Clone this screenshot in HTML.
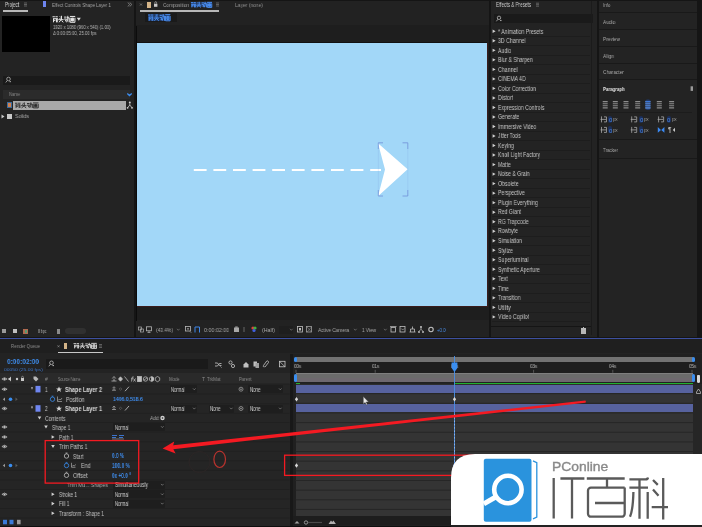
<!DOCTYPE html>
<html><head><meta charset="utf-8">
<style>
*{margin:0;padding:0;box-sizing:border-box}
html,body{width:702px;height:527px;overflow:hidden;background:#151515;font-family:"Liberation Sans",sans-serif;color:#9a9a9a;position:relative}
.a{position:absolute}
.t{position:absolute;white-space:nowrap;will-change:transform}
svg{position:absolute;left:0;top:0}
</style></head><body>

<div class="a" style="left:0px;top:1px;width:134px;height:336px;background:#232323;"></div>
<div class="a" style="left:136px;top:1px;width:353px;height:336px;background:#222222;"></div>
<div class="a" style="left:136px;top:25px;width:353px;height:294.5px;background:#1e1e1e;"></div>
<div class="a" style="left:137px;top:43px;width:350px;height:263px;background:#a2d7f8;"></div>
<div class="a" style="left:491px;top:1px;width:106px;height:336px;background:#232323;"></div>
<div class="a" style="left:599px;top:1px;width:98px;height:336px;background:#232323;"></div>
<div class="a" style="left:0px;top:338px;width:702px;height:1.4px;background:#3d50a0;"></div>
<div class="a" style="left:0px;top:339.4px;width:702px;height:188px;background:#232323;"></div>
<div class="t" style="left:5px;top:1.97px;font-size:6.5px;line-height:6.5px;color:#d0d0d0;font-weight:normal;transform:scaleX(0.6921);transform-origin:0 0;">Project</div>
<svg width="702" height="527"><path d="M24,3h3M24,4.5h3M24,6h3" stroke="#8a8a8a" stroke-width="0.6"/></svg>
<div class="a" style="left:3px;top:10.3px;width:25px;height:1.4px;background:#b8b8b8;"></div>
<div class="a" style="left:42.6px;top:1px;width:3.8px;height:6px;background:#6f86f0;"></div>
<div class="t" style="left:52px;top:2.11px;font-size:6.2px;line-height:6.2px;color:#a0a0a0;font-weight:normal;transform:scaleX(0.7143);transform-origin:0 0;">Effect Controls Shape Layer 1</div>
<svg width="702" height="527"><path d="M128,2.5l1.5,2l-1.5,2M130,2.5l1.5,2l-1.5,2" stroke="#a0a0a0" stroke-width="0.7" fill="none"/></svg>
<div class="a" style="left:2px;top:16px;width:48px;height:36px;background:#000;"></div>
<svg width="702" height="527"><path d="M52.50,16.78h2.38M55.41,16.78h2.38M53.03,18.73h4.24M53.56,18.73v3.58M53.56,20.35h1.85M56.48,19.05v3.25M57.27,18.07v4.23M59.89,16.45l0.79,0.97M59.62,18.07l0.79,0.97M58.30,19.70h5.30M61.48,15.80v3.90l-2.65,2.60M61.48,20.68l1.85,1.62M64.10,17.10h2.38M64.10,19.05h2.38l-1.06,1.95h1.32M66.75,17.75h2.38v4.55M67.81,15.80v3.25l-1.06,3.25M69.90,16.45h5.30M70.17,17.75v4.55h4.77v-4.55M71.49,18.07h2.12v2.93h-2.12zM72.55,18.07v2.93M71.49,19.50h2.12" stroke="#e8e8e8" stroke-width="1.0" fill="none"/></svg>
<svg width="702" height="527"><path d="M76.8,17.8h4l-2,3z" fill="#e0e0e0"/></svg>
<div class="t" style="left:52.5px;top:24.69px;font-size:5px;line-height:5px;color:#b8b8b8;font-weight:normal;transform:scaleX(0.8376);transform-origin:0 0;">1920 x 1080 (960 x 540) (1.00)</div>
<div class="t" style="left:52.5px;top:31.19px;font-size:5px;line-height:5px;color:#b8b8b8;font-weight:normal;transform:scaleX(0.8458);transform-origin:0 0;">&#916; 0:00:05:00, 25.00 fps</div>
<div class="a" style="left:3px;top:75.5px;width:127px;height:9.5px;background:#1a1a1a;"></div>
<svg width="702" height="527"><circle cx="8.5" cy="79" r="1.8" stroke="#b0b0b0" stroke-width="0.8" fill="none"/><path d="M7.3,80.5l-1.6,2M9.6,81.6h1.2M10.2,81v1.2" stroke="#b0b0b0" stroke-width="0.8"/></svg>
<div class="a" style="left:3px;top:90px;width:127px;height:9px;background:#2b2b2b;"></div>
<div class="t" style="left:9px;top:92.79px;font-size:4.8px;line-height:4.8px;color:#8a8a8a;font-weight:normal;transform:scaleX(0.8592);transform-origin:0 0;">Name</div>
<svg width="702" height="527"><path d="M127.3,93.5l2.2,2l2.2,-2" stroke="#3d8ef0" stroke-width="1.3" fill="none"/></svg>
<div class="a" style="left:6.5px;top:102px;width:5px;height:6px;background:#3c6c9c;"></div>
<div class="a" style="left:7.5px;top:103px;width:3px;height:4px;background:#d08050;"></div>
<div class="a" style="left:13px;top:100.6px;width:113px;height:9.4px;background:#a9a9a9;"></div>
<svg width="702" height="527"><path d="M15.00,103.23h2.48M18.02,103.23h2.48M15.55,104.88h4.40M16.10,104.88v3.03M16.10,106.25h1.92M19.12,105.15v2.75M19.95,104.33v3.58M22.65,102.95l0.82,0.82M22.38,104.33l0.82,0.82M21.00,105.70h5.50M24.30,102.40v3.30l-2.75,2.20M24.30,106.53l1.92,1.38M27.00,103.50h2.48M27.00,105.15h2.48l-1.10,1.65h1.38M29.75,104.05h2.48v3.85M30.85,102.40v2.75l-1.10,2.75M33.00,102.95h5.50M33.27,104.05v3.85h4.95v-3.85M34.65,104.33h2.20v2.48h-2.20zM35.75,104.33v2.48M34.65,105.54h2.20" stroke="#262626" stroke-width="0.9" fill="none"/></svg>
<svg width="702" height="527"><circle cx="129.8" cy="102.5" r="1" fill="#d0d0d0"/><path d="M129.8,103.5v1.5l-2,2.5M129.8,105l2,2.5" stroke="#d0d0d0" stroke-width="0.8" fill="none"/><circle cx="127.6" cy="107.8" r="0.9" fill="#d0d0d0"/><circle cx="132" cy="107.8" r="0.9" fill="#d0d0d0"/></svg>
<svg width="702" height="527"><path d="M1.5,114.5l3,2l-3,2z" fill="#c8c8c8"/></svg>
<div class="a" style="left:7px;top:114px;width:5px;height:5px;background:#c8c8c8;"></div>
<div class="t" style="left:15px;top:114.45px;font-size:5.5px;line-height:5.5px;color:#a8a8a8;font-weight:normal;transform:scaleX(0.9346);transform-origin:0 0;">Solids</div>
<div class="a" style="left:1.5px;top:329px;width:4.5px;height:4px;background:#9a9a9a;"></div>
<div class="a" style="left:13px;top:329px;width:4px;height:4px;background:#c0c0c0;"></div>
<div class="a" style="left:23px;top:328.5px;width:5px;height:5px;background:#b06a50;"></div>
<div class="a" style="left:24.5px;top:329.5px;width:2.5px;height:3px;background:#5a9a70;"></div>
<div class="t" style="left:37.6px;top:328.95px;font-size:5.5px;line-height:5.5px;color:#a8a8a8;font-weight:normal;transform:scaleX(0.6244);transform-origin:0 0;">8 bpc</div>
<div class="a" style="left:56.5px;top:328.5px;width:3.5px;height:5px;background:#8a8a8a;"></div>
<div class="a" style="left:65px;top:328px;width:20.5px;height:6px;background:#303030;border-radius:3px"></div>
<svg width="702" height="527"><path d="M140,3.5l2,2M142,3.5l-2,2" stroke="#9a9a9a" stroke-width="0.6"/></svg>
<div class="a" style="left:147px;top:1.5px;width:3.5px;height:6px;background:#d4b488;"></div>
<svg width="702" height="527"><rect x="154" y="3.8" width="3.4" height="3" fill="#c8c8c8"/><path d="M154.8,3.8v-1.2a0.9,0.9 0 0 1 1.8,0v1.2" stroke="#c8c8c8" stroke-width="0.6" fill="none"/></svg>
<div class="t" style="left:163px;top:2.21px;font-size:6px;line-height:6px;color:#a0a0a0;font-weight:normal;transform:scaleX(0.7797);transform-origin:0 0;">Composition</div>
<div class="a" style="left:190.7px;top:1.8px;width:21px;height:5.6px;background:rgba(40,90,180,0.45);"></div>
<svg width="702" height="527"><path d="M190.90,2.64h2.21M193.59,2.64h2.21M191.39,4.32h3.92M191.88,4.32v3.08M191.88,5.72h1.72M194.58,4.60v2.80M195.31,3.76v3.64M197.77,2.36l0.73,0.84M197.53,3.76l0.73,0.84M196.30,5.16h4.90M199.24,1.80v3.36l-2.45,2.24M199.24,6.00l1.72,1.40M201.70,2.92h2.21M201.70,4.60h2.21l-0.98,1.68h1.23M204.15,3.48h2.21v3.92M205.13,1.80v2.80l-0.98,2.80M207.10,2.36h4.90M207.35,3.48v3.92h4.41v-3.92M208.57,3.76h1.96v2.52h-1.96zM209.55,3.76v2.52M208.57,4.99h1.96" stroke="#4a8ef0" stroke-width="1.0" fill="none"/></svg>
<svg width="702" height="527"><path d="M216,3h3M216,4.5h3M216,6h3" stroke="#8a8a8a" stroke-width="0.6"/></svg>
<div class="a" style="left:140px;top:10.2px;width:79px;height:1.4px;background:#b8b8b8;"></div>
<div class="t" style="left:235px;top:2.21px;font-size:6px;line-height:6px;color:#909090;font-weight:normal;transform:scaleX(0.8231);transform-origin:0 0;">Layer (none)</div>
<div class="a" style="left:144.5px;top:12.5px;width:32px;height:9.7px;background:#1a1a1a;"></div>
<div class="a" style="left:148px;top:14px;width:22px;height:6.8px;background:rgba(40,90,180,0.45);"></div>
<svg width="702" height="527"><path d="M148.20,15.02h2.29M151.00,15.02h2.29M148.71,17.06h4.08M149.22,17.06v3.74M149.22,18.76h1.78M152.02,17.40v3.40M152.79,16.38v4.42M155.43,14.68l0.76,1.02M155.17,16.38l0.76,1.02M153.90,18.08h5.10M156.96,14.00v4.08l-2.55,2.72M156.96,19.10l1.78,1.70M159.60,15.36h2.29M159.60,17.40h2.29l-1.02,2.04h1.27M162.15,16.04h2.29v4.76M163.17,14.00v3.40l-1.02,3.40M165.30,14.68h5.10M165.55,16.04v4.76h4.59v-4.76M166.83,16.38h2.04v3.06h-2.04zM167.85,16.38v3.06M166.83,17.88h2.04" stroke="#4a8ef0" stroke-width="1.0" fill="none"/></svg>
<div class="a" style="left:136px;top:26px;width:1px;height:295px;background:#0c0c0c;"></div>
<div class="a" style="left:137px;top:42.2px;width:350px;height:0.9px;background:#121212;"></div>
<div class="a" style="left:137px;top:306px;width:351px;height:0.8px;background:#3a1c1c;"></div>
<div class="a" style="left:487px;top:43px;width:0.8px;height:264px;background:#3a1c1c;"></div>
<svg width="702" height="527"><path d="M193.8,170H381" stroke="#ffffff" stroke-width="2" stroke-dasharray="12.8 6.8"/><path d="M378,143.3L407.6,169.3L378,196.2L385,169.5z" fill="#ffffff"/><path d="M383,142.8H378.3V149M378.3,190V196H383M402.5,142.8H407.8V149M407.8,190V196H402.5" stroke="#7090d8" stroke-width="0.8" fill="none"/><path d="M378.3,149V190M407.8,149V190" stroke="#6a88d6" stroke-width="0.6" fill="none" opacity="0.25"/></svg>
<svg width="702" height="527"><rect x="138.5" y="327" width="3" height="3" fill="none" stroke="#b0b0b0" stroke-width="0.7"/><rect x="140.5" y="329" width="3" height="3" fill="none" stroke="#b0b0b0" stroke-width="0.7"/><rect x="146.5" y="326.8" width="5" height="4" fill="none" stroke="#b8b8b8" stroke-width="0.8"/><path d="M149,330.8v1.5M147.5,332.5h3" stroke="#b8b8b8" stroke-width="0.7"/></svg>
<div class="t" style="left:156px;top:327.69px;font-size:5.2px;line-height:5.2px;color:#a8a8a8;font-weight:normal;transform:scaleX(0.9337);transform-origin:0 0;">(43.4%)</div>
<svg width="702" height="527"><path d="M177,328.8l1.3,1.5l1.3,-1.5" stroke="#8a8a8a" stroke-width="0.6" fill="none"/><rect x="185.5" y="326.5" width="5" height="4.5" fill="none" stroke="#b8b8b8" stroke-width="0.8"/><path d="M188,328v1.8M187,328.8h2" stroke="#b8b8b8" stroke-width="0.6"/><path d="M190,331.5l1.2,1.2" stroke="#b8b8b8" stroke-width="0.7"/><path d="M195,332.5v-5.5h4.5v5.5" stroke="#3f86e8" stroke-width="1" fill="none"/></svg>
<div class="t" style="left:204px;top:327.60px;font-size:5.4px;line-height:5.4px;color:#a8a8a8;font-weight:normal;transform:scaleX(0.9796);transform-origin:0 0;">0:00:02:00</div>
<svg width="702" height="527"><rect x="234" y="327.5" width="5" height="4.5" fill="#a8a8a8"/><rect x="235.2" y="326.5" width="2.5" height="1.2" fill="#a8a8a8"/><rect x="243" y="327" width="2" height="5" fill="#444"/><circle cx="253" cy="328" r="1.6" fill="#e04040"/><circle cx="255" cy="328" r="1.6" fill="#40b040"/><circle cx="254" cy="330.5" r="1.6" fill="#4060e0"/></svg>
<div class="t" style="left:262px;top:327.69px;font-size:5.2px;line-height:5.2px;color:#a8a8a8;font-weight:normal;transform:scaleX(1.0228);transform-origin:0 0;">(Half)</div>
<div class="a" style="left:279px;top:325.5px;width:14px;height:8px;background:#1e1e1e;"></div>
<svg width="702" height="527"><path d="M290,328.8l1.3,1.5l1.3,-1.5" stroke="#8a8a8a" stroke-width="0.6" fill="none"/><rect x="297.5" y="326.5" width="5" height="5.5" fill="none" stroke="#c0c0c0" stroke-width="0.8"/><rect x="299" y="328" width="2" height="2.5" fill="#c0c0c0"/><rect x="306.5" y="326.5" width="5" height="5.5" fill="none" stroke="#a0a0a0" stroke-width="0.8"/><path d="M307,327l4.5,5M311.5,327l-4.5,5" stroke="#a0a0a0" stroke-width="0.5"/></svg>
<div class="t" style="left:317.6px;top:327.60px;font-size:5.4px;line-height:5.4px;color:#a8a8a8;font-weight:normal;transform:scaleX(0.8811);transform-origin:0 0;">Active Camera</div>
<svg width="702" height="527"><path d="M354,328.8l1.3,1.5l1.3,-1.5" stroke="#8a8a8a" stroke-width="0.6" fill="none"/></svg>
<div class="t" style="left:362px;top:327.60px;font-size:5.4px;line-height:5.4px;color:#a8a8a8;font-weight:normal;transform:scaleX(0.8690);transform-origin:0 0;">1 View</div>
<svg width="702" height="527"><path d="M384,328.8l1.3,1.5l1.3,-1.5" stroke="#8a8a8a" stroke-width="0.6" fill="none"/><rect x="391" y="327.5" width="4.5" height="4.5" fill="none" stroke="#c0c0c0" stroke-width="0.8"/><path d="M390,326.5h6.5" stroke="#c0c0c0" stroke-width="0.7"/><rect x="400" y="326.5" width="5" height="5.5" fill="none" stroke="#c0c0c0" stroke-width="0.8"/><path d="M401.2,328.5l1.5,1.5l1.5,-1.5" stroke="#c0c0c0" stroke-width="0.6" fill="none"/><path d="M409.5,332h6M410.5,332v-3h4v3M412.5,329v-2.5" stroke="#c0c0c0" stroke-width="0.8" fill="none"/><circle cx="421" cy="327" r="1" fill="#c8c8c8"/><path d="M421,328v1.3l-2,2M421,329.3l2,2" stroke="#c8c8c8" stroke-width="0.7" fill="none"/><circle cx="419" cy="332" r="0.9" fill="#c8c8c8"/><circle cx="423" cy="332" r="0.9" fill="#c8c8c8"/><circle cx="431" cy="329.5" r="2.2" fill="none" stroke="#c0c0c0" stroke-width="1.1"/></svg>
<div class="t" style="left:436.5px;top:327.60px;font-size:5.4px;line-height:5.4px;color:#4a8ee8;font-weight:normal;transform:scaleX(0.7974);transform-origin:0 0;">+0.0</div>
<div class="t" style="left:496px;top:2.16px;font-size:6.3px;line-height:6.3px;color:#cccccc;font-weight:normal;transform:scaleX(0.7261);transform-origin:0 0;">Effects &amp; Presets</div>
<svg width="702" height="527"><path d="M536,3.2h3M536,4.7h3M536,6.2h3" stroke="#8a8a8a" stroke-width="0.6"/></svg>
<div class="a" style="left:493.5px;top:14.2px;width:99.5px;height:9.2px;background:#1a1a1a;"></div>
<svg width="702" height="527"><circle cx="499" cy="17.8" r="1.7" stroke="#b8b8b8" stroke-width="0.8" fill="none"/><path d="M497.8,19.3l-1.4,2M500.2,20.5h1.2M500.8,19.9v1.2" stroke="#b8b8b8" stroke-width="0.8"/></svg>
<div class="t" style="left:498px;top:28.57px;font-size:6.9px;line-height:6.9px;color:#c4c4c4;font-weight:normal;transform:scaleX(0.7540);transform-origin:0 0;">* Animation Presets</div>
<div class="a" style="left:492px;top:35.6px;width:98px;height:0.6px;background:#1d1d1d;"></div>
<div class="t" style="left:498px;top:38.09px;font-size:6.9px;line-height:6.9px;color:#c4c4c4;font-weight:normal;transform:scaleX(0.7602);transform-origin:0 0;">3D Channel</div>
<div class="a" style="left:492px;top:45.12px;width:98px;height:0.6px;background:#1d1d1d;"></div>
<div class="t" style="left:498px;top:47.61px;font-size:6.9px;line-height:6.9px;color:#c4c4c4;font-weight:normal;transform:scaleX(0.7480);transform-origin:0 0;">Audio</div>
<div class="a" style="left:492px;top:54.64px;width:98px;height:0.6px;background:#1d1d1d;"></div>
<div class="t" style="left:498px;top:57.13px;font-size:6.9px;line-height:6.9px;color:#c4c4c4;font-weight:normal;transform:scaleX(0.7437);transform-origin:0 0;">Blur &amp; Sharpen</div>
<div class="a" style="left:492px;top:64.16px;width:98px;height:0.6px;background:#1d1d1d;"></div>
<div class="t" style="left:498px;top:66.65px;font-size:6.9px;line-height:6.9px;color:#c4c4c4;font-weight:normal;transform:scaleX(0.7665);transform-origin:0 0;">Channel</div>
<div class="a" style="left:492px;top:73.68px;width:98px;height:0.6px;background:#1d1d1d;"></div>
<div class="t" style="left:498px;top:76.17px;font-size:6.9px;line-height:6.9px;color:#c4c4c4;font-weight:normal;transform:scaleX(0.7448);transform-origin:0 0;">CINEMA 4D</div>
<div class="a" style="left:492px;top:83.2px;width:98px;height:0.6px;background:#1d1d1d;"></div>
<div class="t" style="left:498px;top:85.69px;font-size:6.9px;line-height:6.9px;color:#c4c4c4;font-weight:normal;transform:scaleX(0.7565);transform-origin:0 0;">Color Correction</div>
<div class="a" style="left:492px;top:92.72px;width:98px;height:0.6px;background:#1d1d1d;"></div>
<div class="t" style="left:498px;top:95.21px;font-size:6.9px;line-height:6.9px;color:#c4c4c4;font-weight:normal;transform:scaleX(0.7725);transform-origin:0 0;">Distort</div>
<div class="a" style="left:492px;top:102.24px;width:98px;height:0.6px;background:#1d1d1d;"></div>
<div class="t" style="left:498px;top:104.73px;font-size:6.9px;line-height:6.9px;color:#c4c4c4;font-weight:normal;transform:scaleX(0.7515);transform-origin:0 0;">Expression Controls</div>
<div class="a" style="left:492px;top:111.76px;width:98px;height:0.6px;background:#1d1d1d;"></div>
<div class="t" style="left:498px;top:114.25px;font-size:6.9px;line-height:6.9px;color:#c4c4c4;font-weight:normal;transform:scaleX(0.7404);transform-origin:0 0;">Generate</div>
<div class="a" style="left:492px;top:121.28px;width:98px;height:0.6px;background:#1d1d1d;"></div>
<div class="t" style="left:498px;top:123.77px;font-size:6.9px;line-height:6.9px;color:#c4c4c4;font-weight:normal;transform:scaleX(0.7492);transform-origin:0 0;">Immersive Video</div>
<div class="a" style="left:492px;top:130.8px;width:98px;height:0.6px;background:#1d1d1d;"></div>
<div class="t" style="left:498px;top:133.29px;font-size:6.9px;line-height:6.9px;color:#c4c4c4;font-weight:normal;transform:scaleX(0.6971);transform-origin:0 0;">Jitter Tools</div>
<div class="a" style="left:492px;top:140.32px;width:98px;height:0.6px;background:#1d1d1d;"></div>
<div class="t" style="left:498px;top:142.81px;font-size:6.9px;line-height:6.9px;color:#c4c4c4;font-weight:normal;transform:scaleX(0.7489);transform-origin:0 0;">Keying</div>
<div class="a" style="left:492px;top:149.84px;width:98px;height:0.6px;background:#1d1d1d;"></div>
<div class="t" style="left:498px;top:152.33px;font-size:6.9px;line-height:6.9px;color:#c4c4c4;font-weight:normal;transform:scaleX(0.7385);transform-origin:0 0;">Knoll Light Factory</div>
<div class="a" style="left:492px;top:159.36px;width:98px;height:0.6px;background:#1d1d1d;"></div>
<div class="t" style="left:498px;top:161.85px;font-size:6.9px;line-height:6.9px;color:#c4c4c4;font-weight:normal;transform:scaleX(0.7360);transform-origin:0 0;">Matte</div>
<div class="a" style="left:492px;top:168.88px;width:98px;height:0.6px;background:#1d1d1d;"></div>
<div class="t" style="left:498px;top:171.37px;font-size:6.9px;line-height:6.9px;color:#c4c4c4;font-weight:normal;transform:scaleX(0.7358);transform-origin:0 0;">Noise &amp; Grain</div>
<div class="a" style="left:492px;top:178.4px;width:98px;height:0.6px;background:#1d1d1d;"></div>
<div class="t" style="left:498px;top:180.89px;font-size:6.9px;line-height:6.9px;color:#c4c4c4;font-weight:normal;transform:scaleX(0.7496);transform-origin:0 0;">Obsolete</div>
<div class="a" style="left:492px;top:187.92px;width:98px;height:0.6px;background:#1d1d1d;"></div>
<div class="t" style="left:498px;top:190.41px;font-size:6.9px;line-height:6.9px;color:#c4c4c4;font-weight:normal;transform:scaleX(0.7407);transform-origin:0 0;">Perspective</div>
<div class="a" style="left:492px;top:197.44px;width:98px;height:0.6px;background:#1d1d1d;"></div>
<div class="t" style="left:498px;top:199.93px;font-size:6.9px;line-height:6.9px;color:#c4c4c4;font-weight:normal;transform:scaleX(0.7449);transform-origin:0 0;">Plugin Everything</div>
<div class="a" style="left:492px;top:206.96px;width:98px;height:0.6px;background:#1d1d1d;"></div>
<div class="t" style="left:498px;top:209.45px;font-size:6.9px;line-height:6.9px;color:#c4c4c4;font-weight:normal;transform:scaleX(0.7468);transform-origin:0 0;">Red Giant</div>
<div class="a" style="left:492px;top:216.48px;width:98px;height:0.6px;background:#1d1d1d;"></div>
<div class="t" style="left:498px;top:218.97px;font-size:6.9px;line-height:6.9px;color:#c4c4c4;font-weight:normal;transform:scaleX(0.7457);transform-origin:0 0;">RG Trapcode</div>
<div class="a" style="left:492px;top:226.0px;width:98px;height:0.6px;background:#1d1d1d;"></div>
<div class="t" style="left:498px;top:228.49px;font-size:6.9px;line-height:6.9px;color:#c4c4c4;font-weight:normal;transform:scaleX(0.7450);transform-origin:0 0;">Rowbyte</div>
<div class="a" style="left:492px;top:235.52px;width:98px;height:0.6px;background:#1d1d1d;"></div>
<div class="t" style="left:498px;top:238.01px;font-size:6.9px;line-height:6.9px;color:#c4c4c4;font-weight:normal;transform:scaleX(0.7419);transform-origin:0 0;">Simulation</div>
<div class="a" style="left:492px;top:245.04px;width:98px;height:0.6px;background:#1d1d1d;"></div>
<div class="t" style="left:498px;top:247.53px;font-size:6.9px;line-height:6.9px;color:#c4c4c4;font-weight:normal;transform:scaleX(0.7283);transform-origin:0 0;">Stylize</div>
<div class="a" style="left:492px;top:254.56px;width:98px;height:0.6px;background:#1d1d1d;"></div>
<div class="t" style="left:498px;top:257.05px;font-size:6.9px;line-height:6.9px;color:#c4c4c4;font-weight:normal;transform:scaleX(0.7599);transform-origin:0 0;">Superluminal</div>
<div class="a" style="left:492px;top:264.08px;width:98px;height:0.6px;background:#1d1d1d;"></div>
<div class="t" style="left:498px;top:266.57px;font-size:6.9px;line-height:6.9px;color:#c4c4c4;font-weight:normal;transform:scaleX(0.7414);transform-origin:0 0;">Synthetic Aperture</div>
<div class="a" style="left:492px;top:273.6px;width:98px;height:0.6px;background:#1d1d1d;"></div>
<div class="t" style="left:498px;top:276.09px;font-size:6.9px;line-height:6.9px;color:#c4c4c4;font-weight:normal;transform:scaleX(0.7824);transform-origin:0 0;">Text</div>
<div class="a" style="left:492px;top:283.12px;width:98px;height:0.6px;background:#1d1d1d;"></div>
<div class="t" style="left:498px;top:285.61px;font-size:6.9px;line-height:6.9px;color:#c4c4c4;font-weight:normal;transform:scaleX(0.7031);transform-origin:0 0;">Time</div>
<div class="a" style="left:492px;top:292.64px;width:98px;height:0.6px;background:#1d1d1d;"></div>
<div class="t" style="left:498px;top:295.13px;font-size:6.9px;line-height:6.9px;color:#c4c4c4;font-weight:normal;transform:scaleX(0.7491);transform-origin:0 0;">Transition</div>
<div class="a" style="left:492px;top:302.16px;width:98px;height:0.6px;background:#1d1d1d;"></div>
<div class="t" style="left:498px;top:304.65px;font-size:6.9px;line-height:6.9px;color:#c4c4c4;font-weight:normal;transform:scaleX(0.7530);transform-origin:0 0;">Utility</div>
<div class="a" style="left:492px;top:311.68px;width:98px;height:0.6px;background:#1d1d1d;"></div>
<div class="t" style="left:498px;top:314.17px;font-size:6.9px;line-height:6.9px;color:#c4c4c4;font-weight:normal;transform:scaleX(0.7650);transform-origin:0 0;">Video Copilot</div>
<div class="a" style="left:492px;top:321.2px;width:98px;height:0.6px;background:#1d1d1d;"></div>
<svg width="702" height="527"><path d="M492.6,29.60l3,1.7l-3,1.7zM492.6,39.12l3,1.7l-3,1.7zM492.6,48.64l3,1.7l-3,1.7zM492.6,58.16l3,1.7l-3,1.7zM492.6,67.68l3,1.7l-3,1.7zM492.6,77.20l3,1.7l-3,1.7zM492.6,86.72l3,1.7l-3,1.7zM492.6,96.24l3,1.7l-3,1.7zM492.6,105.76l3,1.7l-3,1.7zM492.6,115.28l3,1.7l-3,1.7zM492.6,124.80l3,1.7l-3,1.7zM492.6,134.32l3,1.7l-3,1.7zM492.6,143.84l3,1.7l-3,1.7zM492.6,153.36l3,1.7l-3,1.7zM492.6,162.88l3,1.7l-3,1.7zM492.6,172.40l3,1.7l-3,1.7zM492.6,181.92l3,1.7l-3,1.7zM492.6,191.44l3,1.7l-3,1.7zM492.6,200.96l3,1.7l-3,1.7zM492.6,210.48l3,1.7l-3,1.7zM492.6,220.00l3,1.7l-3,1.7zM492.6,229.52l3,1.7l-3,1.7zM492.6,239.04l3,1.7l-3,1.7zM492.6,248.56l3,1.7l-3,1.7zM492.6,258.08l3,1.7l-3,1.7zM492.6,267.60l3,1.7l-3,1.7zM492.6,277.12l3,1.7l-3,1.7zM492.6,286.64l3,1.7l-3,1.7zM492.6,296.16l3,1.7l-3,1.7zM492.6,305.68l3,1.7l-3,1.7zM492.6,315.20l3,1.7l-3,1.7z" fill="#d0d0d0"/></svg>
<div class="a" style="left:491px;top:326.3px;width:100px;height:0.7px;background:#151515;"></div>
<div class="a" style="left:590.5px;top:1px;width:0.8px;height:334px;background:#1b1b1b;"></div>
<div class="a" style="left:581px;top:328.2px;width:4.6px;height:5.6px;background:#b8b8b8;"></div>
<div class="a" style="left:582.5px;top:327.3px;width:1.6px;height:1.2px;background:#b8b8b8;"></div>
<div class="t" style="left:603px;top:1.91px;font-size:6.2px;line-height:6.2px;color:#a8a8a8;font-weight:normal;transform:scaleX(0.7156);transform-origin:0 0;">Info</div>
<div class="t" style="left:603px;top:18.61px;font-size:6.2px;line-height:6.2px;color:#a8a8a8;font-weight:normal;transform:scaleX(0.7757);transform-origin:0 0;">Audio</div>
<div class="t" style="left:603px;top:35.61px;font-size:6.2px;line-height:6.2px;color:#a8a8a8;font-weight:normal;transform:scaleX(0.7710);transform-origin:0 0;">Preview</div>
<div class="t" style="left:603px;top:52.61px;font-size:6.2px;line-height:6.2px;color:#a8a8a8;font-weight:normal;transform:scaleX(0.7979);transform-origin:0 0;">Align</div>
<div class="t" style="left:603px;top:69.11px;font-size:6.2px;line-height:6.2px;color:#a8a8a8;font-weight:normal;transform:scaleX(0.7715);transform-origin:0 0;">Character</div>
<div class="a" style="left:599px;top:12.3px;width:98px;height:0.9px;background:#191919;"></div>
<div class="a" style="left:599px;top:28.8px;width:98px;height:0.9px;background:#191919;"></div>
<div class="a" style="left:599px;top:45.5px;width:98px;height:0.9px;background:#191919;"></div>
<div class="a" style="left:599px;top:62.5px;width:98px;height:0.9px;background:#191919;"></div>
<div class="a" style="left:599px;top:79.2px;width:98px;height:0.9px;background:#191919;"></div>
<div class="t" style="left:603px;top:86.31px;font-size:6px;line-height:6px;color:#e0e0e0;font-weight:bold;transform:scaleX(0.7346);transform-origin:0 0;">Paragraph</div>
<svg width="702" height="527"><rect x="690.6" y="86.3" width="2.4" height="4.6" fill="#9a9a9a"/></svg>
<svg width="702" height="527"><rect x="645.2" y="99.5" width="5.4" height="10.5" rx="2" fill="#1f3868"/></svg>
<svg width="702" height="527"><path d="M602.70,101.60h5M602.70,103.70h5M602.70,105.80h5M602.70,107.90h5M612.80,101.60h5M612.80,103.70h5M612.80,105.80h5M612.80,107.90h5M623.50,101.60h5M623.50,103.70h5M623.50,105.80h5M623.50,107.90h5M635.20,101.60h5M635.20,103.70h5M635.20,105.80h5M635.20,107.90h5M645.40,101.60h5M645.40,103.70h5M645.40,105.80h5M645.40,107.90h5M656.80,101.60h5M656.80,103.70h5M656.80,105.80h5M656.80,107.90h5M669.10,101.60h5M669.10,103.70h5M669.10,105.80h5M669.10,107.90h5" stroke="#8c8c8c" stroke-width="1.1"/></svg>
<svg width="702" height="527"><path d="M645.4,101.6h5M645.4,103.7h5M645.4,105.8h5M645.4,107.9h5" stroke="#3d78d8" stroke-width="1.1"/></svg>
<div class="a" style="left:600px;top:112.3px;width:92px;height:0.6px;background:#1c1c1c;"></div>
<svg width="702" height="527"><path d="M601.50,116.40v6M600.50,119.40h5.5M604.00,116.90h2.5v5h-2.5" stroke="#a8a8a8" stroke-width="0.8" fill="none"/></svg>
<div class="a" style="left:608.0px;top:115.9px;width:4.2px;height:7px;background:#1c2f5a;border-radius:2px"></div>
<div class="t" style="left:608.5px;top:117.11px;font-size:6px;line-height:6px;color:#4a86e0;font-weight:normal;transform:scaleX(0.9591);transform-origin:0 0;">0</div>
<div class="t" style="left:612.6px;top:117.35px;font-size:5.5px;line-height:5.5px;color:#9a9a9a;font-weight:normal;transform:scaleX(0.7747);transform-origin:0 0;">px</div>
<svg width="702" height="527"><path d="M631.70,116.40v6M630.70,119.40h5.5M634.20,116.90h2.5v5h-2.5" stroke="#a8a8a8" stroke-width="0.8" fill="none"/></svg>
<div class="a" style="left:639.0px;top:115.9px;width:4.2px;height:7px;background:#1c2f5a;border-radius:2px"></div>
<div class="t" style="left:639.5px;top:117.11px;font-size:6px;line-height:6px;color:#4a86e0;font-weight:normal;transform:scaleX(0.9591);transform-origin:0 0;">0</div>
<div class="t" style="left:644px;top:117.35px;font-size:5.5px;line-height:5.5px;color:#9a9a9a;font-weight:normal;transform:scaleX(0.7747);transform-origin:0 0;">px</div>
<svg width="702" height="527"><path d="M658.60,116.40v6M657.60,119.40h5.5M661.10,116.90h2.5v5h-2.5" stroke="#a8a8a8" stroke-width="0.8" fill="none"/></svg>
<div class="a" style="left:666.5px;top:115.9px;width:4.2px;height:7px;background:#1c2f5a;border-radius:2px"></div>
<div class="t" style="left:667px;top:117.11px;font-size:6px;line-height:6px;color:#4a86e0;font-weight:normal;transform:scaleX(0.9591);transform-origin:0 0;">0</div>
<div class="t" style="left:671.6px;top:117.35px;font-size:5.5px;line-height:5.5px;color:#9a9a9a;font-weight:normal;transform:scaleX(0.7747);transform-origin:0 0;">px</div>
<svg width="702" height="527"><path d="M601.50,126.90v6M600.50,129.90h5.5M604.00,127.40h2.5v5h-2.5" stroke="#a8a8a8" stroke-width="0.8" fill="none"/></svg>
<div class="a" style="left:608.0px;top:126.4px;width:4.2px;height:7px;background:#1c2f5a;border-radius:2px"></div>
<div class="t" style="left:608.5px;top:127.61px;font-size:6px;line-height:6px;color:#4a86e0;font-weight:normal;transform:scaleX(0.9591);transform-origin:0 0;">0</div>
<div class="t" style="left:612.6px;top:127.85px;font-size:5.5px;line-height:5.5px;color:#9a9a9a;font-weight:normal;transform:scaleX(0.7747);transform-origin:0 0;">px</div>
<svg width="702" height="527"><path d="M631.70,126.90v6M630.70,129.90h5.5M634.20,127.40h2.5v5h-2.5" stroke="#a8a8a8" stroke-width="0.8" fill="none"/></svg>
<div class="a" style="left:639.0px;top:126.4px;width:4.2px;height:7px;background:#1c2f5a;border-radius:2px"></div>
<div class="t" style="left:639.5px;top:127.61px;font-size:6px;line-height:6px;color:#4a86e0;font-weight:normal;transform:scaleX(0.9591);transform-origin:0 0;">0</div>
<div class="t" style="left:644px;top:127.85px;font-size:5.5px;line-height:5.5px;color:#9a9a9a;font-weight:normal;transform:scaleX(0.7747);transform-origin:0 0;">px</div>
<svg width="702" height="527"><path d="M657.8,127l3.2,2.9l-3.2,2.9zM664.4,127l-3.2,2.9l3.2,2.9z" fill="#3a88f0"/></svg>
<div class="t" style="left:667.5px;top:127.47px;font-size:6.5px;line-height:6.5px;color:#c8c8c8;font-weight:normal;">&#182;</div>
<svg width="702" height="527"><path d="M675,127.8l-2.2,2.1l2.2,2.1z" fill="#c8c8c8"/></svg>
<div class="a" style="left:599px;top:139.3px;width:98px;height:0.9px;background:#191919;"></div>
<div class="t" style="left:603px;top:146.91px;font-size:6.2px;line-height:6.2px;color:#a8a8a8;font-weight:normal;transform:scaleX(0.7218);transform-origin:0 0;">Tracker</div>
<div class="a" style="left:599px;top:157.5px;width:98px;height:1px;background:#191919;"></div>
<div class="a" style="left:0px;top:339.4px;width:702px;height:14.1px;background:#1f1f1f;"></div>
<div class="t" style="left:11px;top:343.80px;font-size:5.8px;line-height:5.8px;color:#8a8a8a;font-weight:normal;transform:scaleX(0.7622);transform-origin:0 0;">Render Queue</div>
<svg width="702" height="527"><path d="M57.5,345.3l2,2M59.5,345.3l-2,2" stroke="#9a9a9a" stroke-width="0.6"/></svg>
<div class="a" style="left:63.8px;top:342.5px;width:3.5px;height:6px;background:#d4b488;"></div>
<svg width="702" height="527"><path d="M73.50,343.64h2.52M76.58,343.64h2.52M74.06,345.32h4.48M74.62,345.32v3.08M74.62,346.72h1.96M77.70,345.60v2.80M78.54,344.76v3.64M81.08,343.36l0.84,0.84M80.80,344.76l0.84,0.84M79.40,346.16h5.60M82.76,342.80v3.36l-2.80,2.24M82.76,347.00l1.96,1.40M85.30,343.92h2.52M85.30,345.60h2.52l-1.12,1.68h1.40M88.10,344.48h2.52v3.92M89.22,342.80v2.80l-1.12,2.80M91.20,343.36h5.60M91.48,344.48v3.92h5.04v-3.92M92.88,344.76h2.24v2.52h-2.24zM94.00,344.76v2.52M92.88,345.99h2.24" stroke="#e0e0e0" stroke-width="0.9" fill="none"/></svg>
<svg width="702" height="527"><path d="M99,344.5h3M99,346h3M99,347.5h3" stroke="#8a8a8a" stroke-width="0.6"/></svg>
<div class="a" style="left:58px;top:352px;width:45px;height:1px;background:#c8c8c8;"></div>
<div class="a" style="left:0px;top:353.5px;width:292px;height:20.5px;background:#232323;"></div>
<div class="t" style="left:6.5px;top:357.94px;font-size:8px;line-height:8px;color:#3f8ef0;font-weight:bold;transform:scaleX(0.8177);transform-origin:0 0;">0:00:02:00</div>
<div class="t" style="left:4px;top:367.58px;font-size:4.2px;line-height:4.2px;color:#3a70c0;font-weight:normal;transform:scaleX(1.1847);transform-origin:0 0;">00050 (25.00 fps)</div>
<div class="a" style="left:46px;top:359px;width:162px;height:10px;background:#1a1a1a;"></div>
<svg width="702" height="527"><circle cx="51.5" cy="362.8" r="1.8" stroke="#c0c0c0" stroke-width="0.8" fill="none"/><path d="M50.3,364.3l-1.5,2M52.6,365.5h1.3M53.2,364.9v1.3" stroke="#c0c0c0" stroke-width="0.8"/></svg>
<svg width="702" height="527"><path d="M215,363h2.5l2,2.5h2M215,366h2.5l2,-2.5h2M220.5,366.5l1,1" stroke="#c8c8c8" stroke-width="0.8" fill="none"/><circle cx="230.5" cy="362.5" r="1.6" fill="none" stroke="#c8c8c8" stroke-width="0.8"/><circle cx="233" cy="366" r="1.6" fill="none" stroke="#c8c8c8" stroke-width="0.8"/><path d="M243.5,367.5h5v-3l-2.5,-2.5l-2.5,2.5z" fill="#c0c0c0"/><rect x="253.5" y="361.5" width="3.5" height="5" fill="#c0c0c0"/><rect x="255.5" y="363" width="3.5" height="5" fill="#a0a0a0"/><path d="M265,367l3.5,-4.5a1.2,1.2 0 0 0 -1.8,-1.4l-3.3,4.5a0.8,0.8 0 0 0 1.3,1" fill="none" stroke="#c8c8c8" stroke-width="0.8"/><rect x="279.5" y="361.3" width="5.5" height="5.5" fill="none" stroke="#c8c8c8" stroke-width="0.8"/><path d="M280,361.8l5,5" stroke="#c8c8c8" stroke-width="0.7"/></svg>
<div class="a" style="left:0px;top:373.2px;width:289.5px;height:10.8px;background:#2a2a2a;"></div>
<svg width="702" height="527"><path d="M1.90,379.00Q4.50,376.40 7.10,379.00Q4.50,381.60 1.90,379.00z" fill="none" stroke="#c8c8c8" stroke-width="0.7"/><circle cx="4.5" cy="379" r="0.9" fill="#c8c8c8"/><path d="M8.5,378h1l1.5,-1.5v5l-1.5,-1.5h-1z" fill="#c8c8c8"/><circle cx="17" cy="379" r="1.2" fill="#c8c8c8"/><rect x="21" y="378" width="3" height="3" fill="#c8c8c8"/><path d="M21.6,378v-0.8a0.9,0.9 0 0 1 1.8,0v0.8" stroke="#c8c8c8" stroke-width="0.5" fill="none"/><path d="M33.5,376.5h2.5l2.5,2.5l-2.5,2.5l-2.5,-2.5z" fill="#b8b8b8"/></svg>
<div class="t" style="left:44.5px;top:377.19px;font-size:5px;line-height:5px;color:#8a8a8a;font-weight:normal;">#</div>
<div class="t" style="left:57.5px;top:377.19px;font-size:5px;line-height:5px;color:#8a8a8a;font-weight:normal;transform:scaleX(0.7361);transform-origin:0 0;">Source Name</div>
<svg width="702" height="527"><g stroke="#c0c0c0" stroke-width="0.75" fill="none"><path d="M111.5,381h5M114,381v-2.5M112.3,378.5l1.7,-2l1.7,2"/><path d="M120.5,376.8l2,2.2l-2,2.2l-2,-2.2z" fill="#c0c0c0"/><path d="M124.5,376.5l4,5"/><path d="M131.5,381.5l0.8,-4.5h1.5M131,378.8h1.8M133.5,378.5l2,3M135.5,378.5l-2,3"/><rect x="137.5" y="376.6" width="4" height="5" fill="#c0c0c0"/><circle cx="145.5" cy="379" r="2.2"/><path d="M143.8,380.3l3.4,-2.6"/><circle cx="151.5" cy="379" r="2.2"/><path d="M151.5,376.8a2.2,2.2 0 0 1 0,4.4z" fill="#c0c0c0"/><path d="M157.5,376.5l2.2,1.3v2.6l-2.2,1.3l-2.2,-1.3v-2.6z"/></g></svg>
<div class="t" style="left:169px;top:377.19px;font-size:5px;line-height:5px;color:#8a8a8a;font-weight:normal;transform:scaleX(0.8396);transform-origin:0 0;">Mode</div>
<div class="t" style="left:201.5px;top:377.19px;font-size:5px;line-height:5px;color:#8a8a8a;font-weight:normal;">T</div>
<div class="t" style="left:206.5px;top:377.19px;font-size:5px;line-height:5px;color:#8a8a8a;font-weight:normal;transform:scaleX(0.8785);transform-origin:0 0;">TrkMat</div>
<div class="t" style="left:239px;top:377.19px;font-size:5px;line-height:5px;color:#8a8a8a;font-weight:normal;transform:scaleX(0.8486);transform-origin:0 0;">Parent</div>
<div class="a" style="left:0px;top:384px;width:289.5px;height:141.5px;background:#252525;"></div>
<svg width="702" height="527"><path d="M0,384H289.5M0,394H289.5M0,403.7H289.5M0,413.3H289.5M0,422.5H289.5M0,432H289.5M0,441.8H289.5M0,451.3H289.5M0,460.8H289.5M0,470.4H289.5M0,480H289.5M0,489.5H289.5M0,499H289.5M0,508.5H289.5M0,518H289.5" stroke="#1f1f1f" stroke-width="0.8"/></svg>
<svg width="702" height="527"><path d="M1.90,389.20Q4.50,386.60 7.10,389.20Q4.50,391.80 1.90,389.20z" fill="none" stroke="#c8c8c8" stroke-width="0.7"/><circle cx="4.5" cy="389.2" r="0.9" fill="#c8c8c8"/><path d="M1.90,408.50Q4.50,405.90 7.10,408.50Q4.50,411.10 1.90,408.50z" fill="none" stroke="#c8c8c8" stroke-width="0.7"/><circle cx="4.5" cy="408.5" r="0.9" fill="#c8c8c8"/><path d="M1.90,427.00Q4.50,424.40 7.10,427.00Q4.50,429.60 1.90,427.00z" fill="none" stroke="#c8c8c8" stroke-width="0.7"/><circle cx="4.5" cy="427" r="0.9" fill="#c8c8c8"/><path d="M1.90,437.00Q4.50,434.40 7.10,437.00Q4.50,439.60 1.90,437.00z" fill="none" stroke="#c8c8c8" stroke-width="0.7"/><circle cx="4.5" cy="437" r="0.9" fill="#c8c8c8"/><path d="M1.90,446.50Q4.50,443.90 7.10,446.50Q4.50,449.10 1.90,446.50z" fill="none" stroke="#c8c8c8" stroke-width="0.7"/><circle cx="4.5" cy="446.5" r="0.9" fill="#c8c8c8"/><path d="M1.90,494.30Q4.50,491.70 7.10,494.30Q4.50,496.90 1.90,494.30z" fill="none" stroke="#c8c8c8" stroke-width="0.7"/><circle cx="4.5" cy="494.3" r="0.9" fill="#c8c8c8"/></svg>
<svg width="702" height="527"><path d="M31,387.20h2l-1,2.5z" fill="#c0c0c0"/><rect x="35.5" y="385.90" width="5" height="6.5" fill="#6f86f0"/><path d="M59,386.40l0.9,2h2.1l-1.7,1.3l0.7,2.2l-2,-1.4l-2,1.4l0.7,-2.2l-1.7,-1.3h2.1z" fill="#d8d8d8"/></svg>
<div class="t" style="left:44.5px;top:386.67px;font-size:6.5px;line-height:6.5px;color:#c8c8c8;font-weight:normal;transform:scaleX(0.7470);transform-origin:0 0;">1</div>
<div class="t" style="left:65px;top:386.76px;font-size:6.3px;line-height:6.3px;color:#d8d8d8;font-weight:bold;transform:scaleX(0.8661);transform-origin:0 0;">Shape Layer 2</div>
<svg width="702" height="527"><path d="M112,390.20h4M114,390.20v-2.5M112.5,388.20l1.5,-1.5l1.5,1.5" stroke="#b8b8b8" stroke-width="0.7" fill="none"/><path d="M120.5,387.70l1.3,1.3l-1.3,1.3l-1.3,-1.3z" fill="none" stroke="#7a7a7a" stroke-width="0.5"/><path d="M125,391.20l4,-4.5" stroke="#c8c8c8" stroke-width="0.8"/></svg>
<div class="a" style="left:169.5px;top:385.2px;width:27.5px;height:8px;background:#1e1e1e;border-radius:1px"></div>
<div class="t" style="left:171.0px;top:386.76px;font-size:6.3px;line-height:6.3px;color:#d0d0d0;font-weight:normal;transform:scaleX(0.6650);transform-origin:0 0;">Normal</div>
<svg width="702" height="527"><path d="M193.00,388.40l1.3,1.4l1.3,-1.4" stroke="#9a9a9a" stroke-width="0.6" fill="none"/></svg>
<svg width="702" height="527"><circle cx="241" cy="389.20" r="2" fill="none" stroke="#9a9a9a" stroke-width="0.8"/><circle cx="241" cy="389.20" r="0.8" fill="#9a9a9a"/></svg>
<div class="a" style="left:248px;top:385.2px;width:35px;height:8px;background:#1e1e1e;border-radius:1px"></div>
<div class="t" style="left:249.5px;top:386.76px;font-size:6.3px;line-height:6.3px;color:#d0d0d0;font-weight:normal;transform:scaleX(0.6972);transform-origin:0 0;">None</div>
<svg width="702" height="527"><path d="M279.00,388.40l1.3,1.4l1.3,-1.4" stroke="#9a9a9a" stroke-width="0.6" fill="none"/></svg>
<svg width="702" height="527"><path d="M31,406.50h2l-1,2.5z" fill="#c0c0c0"/><rect x="35.5" y="405.20" width="5" height="6.5" fill="#6f86f0"/><path d="M59,405.70l0.9,2h2.1l-1.7,1.3l0.7,2.2l-2,-1.4l-2,1.4l0.7,-2.2l-1.7,-1.3h2.1z" fill="#d8d8d8"/></svg>
<div class="t" style="left:44.5px;top:405.97px;font-size:6.5px;line-height:6.5px;color:#c8c8c8;font-weight:normal;transform:scaleX(0.7470);transform-origin:0 0;">2</div>
<div class="t" style="left:65px;top:406.06px;font-size:6.3px;line-height:6.3px;color:#d8d8d8;font-weight:bold;transform:scaleX(0.8661);transform-origin:0 0;">Shape Layer 1</div>
<svg width="702" height="527"><path d="M112,409.50h4M114,409.50v-2.5M112.5,407.50l1.5,-1.5l1.5,1.5" stroke="#b8b8b8" stroke-width="0.7" fill="none"/><path d="M120.5,407.00l1.3,1.3l-1.3,1.3l-1.3,-1.3z" fill="none" stroke="#7a7a7a" stroke-width="0.5"/><path d="M125,410.50l4,-4.5" stroke="#c8c8c8" stroke-width="0.8"/></svg>
<div class="a" style="left:169.5px;top:404.5px;width:27.5px;height:8px;background:#1e1e1e;border-radius:1px"></div>
<div class="t" style="left:171.0px;top:406.06px;font-size:6.3px;line-height:6.3px;color:#d0d0d0;font-weight:normal;transform:scaleX(0.6650);transform-origin:0 0;">Normal</div>
<svg width="702" height="527"><path d="M193.00,407.70l1.3,1.4l1.3,-1.4" stroke="#9a9a9a" stroke-width="0.6" fill="none"/></svg>
<svg width="702" height="527"><circle cx="241" cy="408.50" r="2" fill="none" stroke="#9a9a9a" stroke-width="0.8"/><circle cx="241" cy="408.50" r="0.8" fill="#9a9a9a"/></svg>
<div class="a" style="left:248px;top:404.5px;width:35px;height:8px;background:#1e1e1e;border-radius:1px"></div>
<div class="t" style="left:249.5px;top:406.06px;font-size:6.3px;line-height:6.3px;color:#d0d0d0;font-weight:normal;transform:scaleX(0.6972);transform-origin:0 0;">None</div>
<svg width="702" height="527"><path d="M279.00,407.70l1.3,1.4l1.3,-1.4" stroke="#9a9a9a" stroke-width="0.6" fill="none"/></svg>
<div class="a" style="left:208.5px;top:404.5px;width:25.5px;height:8px;background:#1e1e1e;border-radius:1px"></div>
<div class="t" style="left:210.0px;top:406.06px;font-size:6.3px;line-height:6.3px;color:#d0d0d0;font-weight:normal;transform:scaleX(0.6972);transform-origin:0 0;">None</div>
<svg width="702" height="527"><path d="M230.00,407.70l1.3,1.4l1.3,-1.4" stroke="#9a9a9a" stroke-width="0.6" fill="none"/></svg>
<svg width="702" height="527"><path d="M5,397.40v3.6l-2.2,-1.8z" fill="#9a9a9a"/><circle cx="10.5" cy="399.20" r="1.8" fill="#3a8ef0"/><path d="M15.5,397.40v3.6l2.2,-1.8z" fill="#5a5a5a"/></svg>
<svg width="702" height="527"><path d="M5,463.70v3.6l-2.2,-1.8z" fill="#9a9a9a"/><circle cx="10.5" cy="465.50" r="1.8" fill="#3a8ef0"/><path d="M15.5,463.70v3.6l2.2,-1.8z" fill="#5a5a5a"/></svg>
<svg width="702" height="527"><circle cx="52.5" cy="399.20" r="2.2" fill="none" stroke="#3a8ef0" stroke-width="0.8"/><path d="M51.50,396.10h2M52.50,396.30v0.8" stroke="#3a8ef0" stroke-width="0.6"/><path d="M57.5,396.5v5h4.5M58,400.5l1.5,-1.5l1,1l1.5,-2" stroke="#c0c0c0" stroke-width="0.6" fill="none"/></svg>
<div class="t" style="left:66px;top:396.76px;font-size:6.3px;line-height:6.3px;color:#c4c4c4;font-weight:normal;transform:scaleX(0.8254);transform-origin:0 0;">Position</div>
<div class="t" style="left:112.8px;top:396.41px;font-size:6.2px;line-height:6.2px;color:#3f8ef0;font-weight:bold;transform:scaleX(0.8233);transform-origin:0 0;">1406.0,518.6</div>
<div class="t" style="left:44.6px;top:415.56px;font-size:6.3px;line-height:6.3px;color:#c0c0c0;font-weight:normal;transform:scaleX(0.8130);transform-origin:0 0;">Contents</div>
<div class="t" style="left:150px;top:415.95px;font-size:5.5px;line-height:5.5px;color:#a8a8a8;font-weight:normal;transform:scaleX(0.8397);transform-origin:0 0;">Add:</div>
<svg width="702" height="527"><circle cx="162.5" cy="418" r="2.2" fill="#d0d0d0"/><path d="M161.5,418h2M162.5,417v2" stroke="#333" stroke-width="0.6"/></svg>
<div class="t" style="left:52px;top:424.56px;font-size:6.3px;line-height:6.3px;color:#c0c0c0;font-weight:normal;transform:scaleX(0.7883);transform-origin:0 0;">Shape 1</div>
<div class="a" style="left:113px;top:423px;width:52px;height:8px;background:#1e1e1e;border-radius:1px"></div>
<div class="t" style="left:114.5px;top:424.56px;font-size:6.3px;line-height:6.3px;color:#d0d0d0;font-weight:normal;transform:scaleX(0.6650);transform-origin:0 0;">Normal</div>
<svg width="702" height="527"><path d="M161.00,426.20l1.3,1.4l1.3,-1.4" stroke="#9a9a9a" stroke-width="0.6" fill="none"/></svg>
<div class="t" style="left:58.5px;top:434.56px;font-size:6.3px;line-height:6.3px;color:#c0c0c0;font-weight:normal;transform:scaleX(0.7961);transform-origin:0 0;">Path 1</div>
<svg width="702" height="527"><path d="M112,435.5h5M112,437.5h4M119,435.5h5M119,437.5h4" stroke="#3f7ee0" stroke-width="0.9"/><path d="M112,439h12" stroke="#c0c0c0" stroke-width="0.5"/></svg>
<div class="t" style="left:58.5px;top:444.06px;font-size:6.3px;line-height:6.3px;color:#c4c4c4;font-weight:normal;transform:scaleX(0.8034);transform-origin:0 0;">Trim Paths 1</div>
<svg width="702" height="527"><circle cx="66.5" cy="456.00" r="2.2" fill="none" stroke="#c0c0c0" stroke-width="0.8"/><path d="M65.50,452.90h2M66.50,453.10v0.8" stroke="#c0c0c0" stroke-width="0.6"/><circle cx="66.5" cy="465.50" r="2.2" fill="none" stroke="#3a8ef0" stroke-width="0.8"/><path d="M65.50,462.40h2M66.50,462.60v0.8" stroke="#3a8ef0" stroke-width="0.6"/><circle cx="66.5" cy="475.30" r="2.2" fill="none" stroke="#c0c0c0" stroke-width="0.8"/><path d="M65.50,472.20h2M66.50,472.40v0.8" stroke="#c0c0c0" stroke-width="0.6"/><path d="M71.5,462.8v4.5h4M72,466.5l1.3,-1.3l1,1l1.3,-1.8" stroke="#c0c0c0" stroke-width="0.6" fill="none"/></svg>
<div class="t" style="left:72.7px;top:453.56px;font-size:6.3px;line-height:6.3px;color:#c0c0c0;font-weight:normal;transform:scaleX(0.7892);transform-origin:0 0;">Start</div>
<div class="t" style="left:80.5px;top:463.06px;font-size:6.3px;line-height:6.3px;color:#c0c0c0;font-weight:normal;transform:scaleX(0.8475);transform-origin:0 0;">End</div>
<div class="t" style="left:72.7px;top:472.86px;font-size:6.3px;line-height:6.3px;color:#c0c0c0;font-weight:normal;transform:scaleX(0.8688);transform-origin:0 0;">Offset</div>
<div class="t" style="left:112px;top:453.47px;font-size:6.5px;line-height:6.5px;color:#3f8ef0;font-weight:bold;transform:scaleX(0.7220);transform-origin:0 0;">0.0 %</div>
<div class="t" style="left:112px;top:462.97px;font-size:6.5px;line-height:6.5px;color:#3f8ef0;font-weight:bold;transform:scaleX(0.7547);transform-origin:0 0;">100.0 %</div>
<div class="t" style="left:112px;top:472.77px;font-size:6.5px;line-height:6.5px;color:#3f8ef0;font-weight:bold;transform:scaleX(0.7232);transform-origin:0 0;">0x +0.0 &#176;</div>
<div class="t" style="left:66.5px;top:482.31px;font-size:6.2px;line-height:6.2px;color:#a8a8a8;font-weight:normal;transform:scaleX(0.8133);transform-origin:0 0;">Trim Mu... Shapes</div>
<div class="a" style="left:113px;top:480.7px;width:52px;height:8px;background:#1e1e1e;border-radius:1px"></div>
<div class="t" style="left:114.5px;top:482.26px;font-size:6.3px;line-height:6.3px;color:#d0d0d0;font-weight:normal;transform:scaleX(0.7725);transform-origin:0 0;">Simultaneously</div>
<svg width="702" height="527"><path d="M161.00,483.90l1.3,1.4l1.3,-1.4" stroke="#9a9a9a" stroke-width="0.6" fill="none"/></svg>
<div class="t" style="left:59px;top:491.86px;font-size:6.3px;line-height:6.3px;color:#c0c0c0;font-weight:normal;transform:scaleX(0.7672);transform-origin:0 0;">Stroke 1</div>
<div class="a" style="left:113px;top:490.3px;width:52px;height:8px;background:#1e1e1e;border-radius:1px"></div>
<div class="t" style="left:114.5px;top:491.86px;font-size:6.3px;line-height:6.3px;color:#d0d0d0;font-weight:normal;transform:scaleX(0.6650);transform-origin:0 0;">Normal</div>
<svg width="702" height="527"><path d="M161.00,493.50l1.3,1.4l1.3,-1.4" stroke="#9a9a9a" stroke-width="0.6" fill="none"/></svg>
<div class="t" style="left:59px;top:501.16px;font-size:6.3px;line-height:6.3px;color:#c0c0c0;font-weight:normal;transform:scaleX(0.7894);transform-origin:0 0;">Fill 1</div>
<div class="a" style="left:113px;top:499.6px;width:52px;height:8px;background:#1e1e1e;border-radius:1px"></div>
<div class="t" style="left:114.5px;top:501.16px;font-size:6.3px;line-height:6.3px;color:#d0d0d0;font-weight:normal;transform:scaleX(0.6650);transform-origin:0 0;">Normal</div>
<svg width="702" height="527"><path d="M161.00,502.80l1.3,1.4l1.3,-1.4" stroke="#9a9a9a" stroke-width="0.6" fill="none"/></svg>
<div class="t" style="left:59px;top:510.86px;font-size:6.3px;line-height:6.3px;color:#c0c0c0;font-weight:normal;transform:scaleX(0.7869);transform-origin:0 0;">Transform : Shape 1</div>
<svg width="702" height="527"><path d="M37.70,416.60h3.6l-1.8,3zM44.20,425.60h3.6l-1.8,3zM51.60,435.20v3.6l3,-1.8zM51.20,445.10h3.6l-1.8,3zM51.60,492.50v3.6l3,-1.8zM51.60,501.80v3.6l3,-1.8zM51.60,511.50v3.6l3,-1.8z" fill="#d0d0d0"/></svg>
<div class="a" style="left:0px;top:525.5px;width:702px;height:1.5px;background:#0e0e0e;"></div>
<svg width="702" height="527"><rect x="3" y="519.8" width="4" height="4.5" fill="#3a7ad8"/><rect x="9.5" y="519.8" width="4" height="4.5" fill="#3a7ad8"/><rect x="17" y="519.8" width="3.6" height="4.5" fill="#9a9a9a"/></svg>
<div class="a" style="left:289.5px;top:353.5px;width:3px;height:172px;background:#181818;"></div>
<div class="a" style="left:292.5px;top:353.5px;width:410px;height:172px;background:#202020;"></div>
<div class="a" style="left:295.5px;top:384px;width:397.5px;height:132.4px;background:#343434;"></div>
<div class="a" style="left:292.5px;top:516.4px;width:410px;height:9.1px;background:#1d1d1d;"></div>
<svg width="702" height="527"><path d="M295.5,384.00H693M295.5,393.65H693M295.5,403.30H693M295.5,412.95H693M295.5,422.60H693M295.5,432.25H693M295.5,441.90H693M295.5,451.55H693M295.5,461.20H693M295.5,470.85H693M295.5,480.50H693M295.5,490.15H693M295.5,499.80H693M295.5,509.45H693" stroke="#262626" stroke-width="1"/></svg>
<div class="a" style="left:295.5px;top:356.8px;width:397.5px;height:5px;background:#727272;"></div>
<div class="a" style="left:293.5px;top:356.8px;width:3px;height:5px;background:#3a8ef0;border-radius:1.5px"></div>
<div class="a" style="left:691.8px;top:356.8px;width:3px;height:5px;background:#3a8ef0;border-radius:1.5px"></div>
<div class="a" style="left:295.5px;top:361.8px;width:397.5px;height:11px;background:#1e1e1e;"></div>
<div class="t" style="left:293.5px;top:364.45px;font-size:5.5px;line-height:5.5px;color:#b8b8b8;font-weight:normal;transform:scaleX(0.8120);transform-origin:0 0;">00s</div>
<div class="t" style="left:371.7px;top:364.45px;font-size:5.5px;line-height:5.5px;color:#b8b8b8;font-weight:normal;transform:scaleX(0.8120);transform-origin:0 0;">01s</div>
<div class="t" style="left:450.9px;top:364.45px;font-size:5.5px;line-height:5.5px;color:#b8b8b8;font-weight:normal;transform:scaleX(0.8120);transform-origin:0 0;">02s</div>
<div class="t" style="left:530.1px;top:364.45px;font-size:5.5px;line-height:5.5px;color:#b8b8b8;font-weight:normal;transform:scaleX(0.8120);transform-origin:0 0;">03s</div>
<div class="t" style="left:609.3px;top:364.45px;font-size:5.5px;line-height:5.5px;color:#b8b8b8;font-weight:normal;transform:scaleX(0.8120);transform-origin:0 0;">04s</div>
<svg width="702" height="527"><path d="M296.00,369.8V372.8M375.20,369.8V372.8M454.40,369.8V372.8M533.60,369.8V372.8M612.80,369.8V372.8M692.00,369.8V372.8" stroke="#7a7a7a" stroke-width="0.6"/></svg>
<div class="a" style="left:295.5px;top:372.8px;width:397.5px;height:8.8px;background:#6b6b6b;"></div>
<div class="a" style="left:295.5px;top:372.8px;width:397.5px;height:1px;background:#7e7e7e;"></div>
<div class="a" style="left:295.5px;top:377.6px;width:397.5px;height:4px;background:#6e686e;"></div>
<div class="a" style="left:293.8px;top:374px;width:3px;height:7.5px;background:#3a8ef0;border-radius:1.5px"></div>
<div class="a" style="left:691.8px;top:374px;width:3px;height:7.5px;background:#3a8ef0;border-radius:1.5px"></div>
<div class="a" style="left:296px;top:382.8px;width:4px;height:1px;background:#22b030;"></div>
<div class="a" style="left:454.5px;top:382.8px;width:238.5px;height:1.1px;background:#22b030;"></div>
<div class="a" style="left:295.5px;top:384.7px;width:397.5px;height:8.7px;background:#57629e;"></div>
<div class="a" style="left:295.5px;top:403.7px;width:397.5px;height:8.7px;background:#57629e;"></div>
<svg width="702" height="527"><path d="M454.5,356V518" stroke="#4a8ee8" stroke-width="0.9"/><path d="M454.5,414V518" stroke="#dde8f8" stroke-width="0.6" stroke-dasharray="1.5 1.8" opacity="0.8"/><path d="M451.6,362.5h5.8v5.5l-2.9,4l-2.9,-4z" fill="#3a8ef0"/><path d="M296.50,396.90l1.6,2.3l-1.6,2.3l-1.6,-2.3z" fill="#d8d8d8"/><path d="M454.50,396.90l1.6,2.3l-1.6,2.3l-1.6,-2.3z" fill="#d8d8d8"/><path d="M296.50,463.20l1.6,2.3l-1.6,2.3l-1.6,-2.3z" fill="#d8d8d8"/><path d="M454.50,463.20l1.6,2.3l-1.6,2.3l-1.6,-2.3z" fill="#9ab8e8"/></svg>
<svg width="702" height="527"><path d="M363.3,396.5v7.5l1.8,-1.6l1.3,2.6l1,-0.5l-1.3,-2.5h2.5z" fill="#e8e8e8" stroke="#333" stroke-width="0.4"/></svg>
<div class="a" style="left:693px;top:383.5px;width:9px;height:133px;background:#262626;"></div>
<div class="a" style="left:696.5px;top:374.5px;width:3.5px;height:8px;background:#d8d8d8;border-radius:1px 1px 2px 2px"></div>
<svg width="702" height="527"><path d="M696.5,392l2,-3l2,3v1.5h-4z" fill="none" stroke="#c8c8c8" stroke-width="0.7"/></svg>
<div class="t" style="left:688.5px;top:364.45px;font-size:5.5px;line-height:5.5px;color:#b8b8b8;font-weight:normal;transform:scaleX(0.8120);transform-origin:0 0;">05s</div>
<svg width="702" height="527"><path d="M294.5,523.5l2.5,-2.5l2.5,2.5z" fill="#a0a0a0"/><circle cx="306" cy="522.5" r="1.7" fill="none" stroke="#b0b0b0" stroke-width="0.8"/><path d="M308,522.5h14" stroke="#4a4a4a" stroke-width="1.2"/><path d="M328.5,524l2.5,-3.5l1.2,1.5l1.2,-1.5l2.5,3.5z" fill="#b0b0b0"/></svg>
<svg width="702" height="527"><rect x="45.2" y="440.6" width="93.5" height="42.5" fill="none" stroke="#f41a22" stroke-width="1.3"/><rect x="284.6" y="455.2" width="440" height="20.2" fill="none" stroke="#f41a22" stroke-width="1.3"/><ellipse cx="219.7" cy="459.3" rx="5.8" ry="8.2" fill="none" stroke="#b8332e" stroke-width="1.2"/><circle cx="199.5" cy="462" r="10.5" fill="none" stroke="#2c2626" stroke-width="1"/><path d="M171.0,445.60L585.3,400.60Q586.5,401.70 585.3,402.80L171.0,449.40z" fill="#f41a22"/><path d="M162.6,448.6L174.2,441.6L172.6,447.8L175.6,453.4z" fill="#f41a22"/></svg>
<svg width="702" height="527"><path d="M451,527V478Q451,454 475,454H702V527z" fill="#ffffff"/><rect x="483.8" y="458.8" width="47.7" height="62.9" rx="2" fill="#2a93dd"/><path d="M533,460.8l3.8,1.8v54.5l-3.8,1.8" fill="none" stroke="#2a93dd" stroke-width="1.3"/><circle cx="507.9" cy="489.5" r="13.7" fill="none" stroke="#ffffff" stroke-width="4.6"/><path d="M496.5,496.5L483.8,503.8" stroke="#ffffff" stroke-width="5"/></svg>
<div class="t" style="left:552.3px;top:460.82px;font-size:12px;line-height:12px;color:#8a8a8a;font-weight:normal;transform:scaleX(1.1541);transform-origin:0 0;-webkit-text-stroke:0.35px #8a8a8a;">PConline</div>
<svg width="702" height="527"><path d="M553.7,478V518.5M560.4,478.5H584.4M572,478.5V518.5M586.8,478.5H624.7M607,478.5V487.6M624.7,487.6H591a3,3 0 0 0 -3,3V513.7a3,3 0 0 0 3,3H621.7a3,3 0 0 0 3,-3V487.6M595,503H624.7M629.4,479.4H645.5Q647.7,479.4 648,477.5M629.4,487.6H648M639.5,480V518.7M633.4,492Q633,510 630,516.7M647.7,492V518.7M653,480L657.8,484.9M653,489.6L658.5,495.7M663.2,478V519.4M651.7,507.2H668" fill="none" stroke="#5a5a5a" stroke-width="2.3"/></svg>
<div class="a" style="left:451px;top:525.3px;width:251px;height:1.7px;background:#222;"></div>
</body></html>
